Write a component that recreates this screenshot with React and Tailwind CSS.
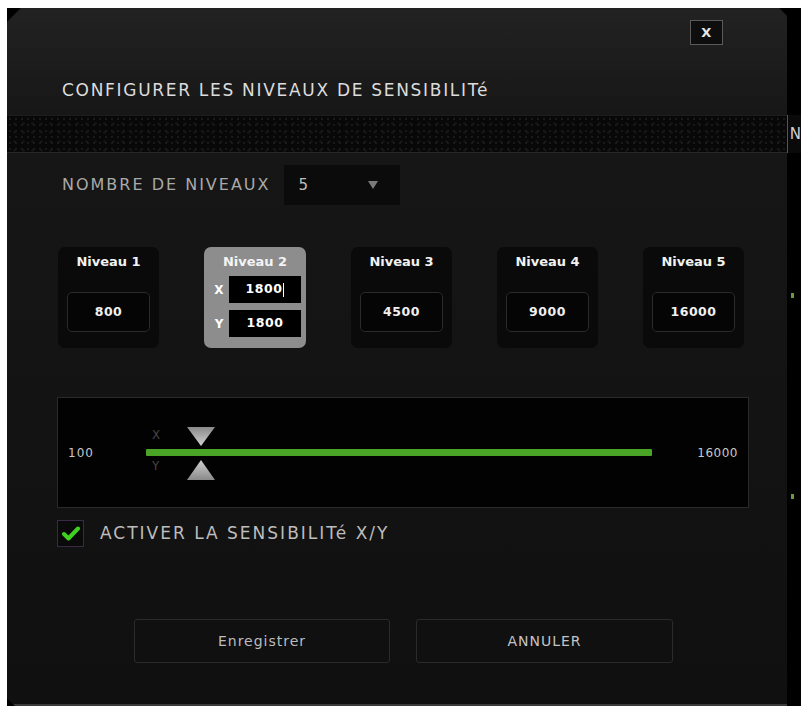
import React from "react";

const font = { fontFamily: '"DejaVu Sans", "Liberation Sans", sans-serif' };

function LevelCard({ title, value }) {
  return (
    <div className="w-[101px] h-[101px] rounded-[7px] bg-[#0a0a0a] flex flex-col items-center pt-[2px]">
      <div className="text-[13px] font-bold text-[#f2f2f2] h-[26px] flex items-center">{title}</div>
      <div className="mt-[17px] w-[83px] h-[40px] rounded-[5px] border border-[#2a2a2a] bg-[#050505] flex items-center justify-center text-[12.5px] font-bold text-[#f0f0f0] tracking-[0.5px]">
        {value}
      </div>
    </div>
  );
}

function SelectedCard() {
  return (
    <div className="w-[102px] h-[101px] rounded-[7px] bg-[#8d8d8d] flex flex-col items-center pt-[2px]">
      <div className="text-[13px] font-bold text-[#f4f4f4] h-[26px] flex items-center">Niveau 2</div>
      <div className="flex flex-col gap-[7px] mt-[1px]">
        <div className="flex items-center">
          <span className="w-[20px] text-center text-[12px] font-bold text-white">X</span>
          <div className="w-[72px] h-[27px] bg-black flex items-center justify-center text-[12.5px] font-bold text-white tracking-[0.5px]">
            1800<span className="inline-block w-[1px] h-[14px] bg-white ml-[1px]" />
          </div>
        </div>
        <div className="flex items-center">
          <span className="w-[20px] text-center text-[12px] font-bold text-white">Y</span>
          <div className="w-[72px] h-[27px] bg-black flex items-center justify-center text-[12.5px] font-bold text-white tracking-[0.5px]">
            1800
          </div>
        </div>
      </div>
    </div>
  );
}

export default function App() {
  return (
    <div className="w-[801px] h-[709px] bg-white overflow-hidden pt-[8px] pl-[7px]" style={font}>
      <div className="w-[794px] h-[698px] bg-black flex">
        {/* dialog */}
        <div
          className="w-[786px] h-[698px] flex flex-col bg-[#131313]"
          style={{ clipPath: "polygon(14px 0, 772px 0, 786px 14px, 786px 698px, 8px 698px, 0 690px, 0 14px)" }}
        >
          {/* header */}
          <div className="h-[107px] bg-gradient-to-b from-[#222222] to-[#171717] flex flex-col px-[55px]">
            <div className="flex justify-end pt-[12px] pr-[9px]">
              <div className="w-[33px] h-[25px] border border-[#5a5a5a] bg-[#0e0e0e] flex items-center justify-center text-[13px] font-bold text-[#e8e8e8]">
                X
              </div>
            </div>
            <div className="mt-[33px] text-[17px] text-[#dcdcdc] tracking-[1.7px]">
              CONFIGURER LES NIVEAUX DE SENSIBILITé
            </div>
          </div>
          {/* textured strip */}
          <div
            className="h-[38px] bg-[#080808] border-t border-[#1d1d1d] border-b border-b-[#262626]"
            style={{
              backgroundImage:
                "radial-gradient(#1a1a1a 1px, transparent 1.5px), radial-gradient(#141414 1px, transparent 1.5px)",
              backgroundSize: "6px 6px, 9px 9px",
              backgroundPosition: "0 0, 3px 3px",
            }}
          />
          {/* body */}
          <div className="flex-1 flex flex-col bg-gradient-to-b from-[#161616] to-[#101010] border-b-[2px] border-[#3a3a3a]">
            <div className="flex items-center pl-[55px] pt-[12px] h-[52px]">
              <span className="text-[16px] text-[#a9a9a9] tracking-[2px]">NOMBRE DE NIVEAUX</span>
              <div className="ml-[13px] w-[116px] h-[40px] bg-[#0b0b0b] flex items-center justify-between pl-[15px] pr-[22px]">
                <span className="text-[15px] text-[#bdbdbd]">5</span>
                <svg width="10" height="8" viewBox="0 0 10 8">
                  <path d="M0 0 L10 0 L5 8 Z" fill="#7a7a7a" />
                </svg>
              </div>
            </div>

            <div className="flex gap-[45px] pl-[51px] mt-[42px]">
              <LevelCard title="Niveau 1" value="800" />
              <SelectedCard />
              <LevelCard title="Niveau 3" value="4500" />
              <LevelCard title="Niveau 4" value="9000" />
              <LevelCard title="Niveau 5" value="16000" />
            </div>

            <div className="ml-[50px] mt-[49px] w-[692px] h-[111px] bg-[#020202] border border-[#2a2a2a] flex items-center pl-[10px] pr-[10px]">
              <span className="w-[78px] text-[12px] text-[#c8c8c8] tracking-[1px]">100</span>
              <div className="relative w-[506px] h-[60px] flex items-center">
                <div className="w-full h-[7px] bg-[#4aa526] rounded-[1px]" />
                <span className="absolute left-[6px] top-[3px] text-[12px] text-[#444]">X</span>
                <span className="absolute left-[6px] top-[34px] text-[12px] text-[#444]">Y</span>
                <svg className="absolute left-[41px] top-[4px]" width="28" height="19" viewBox="0 0 28 19">
                  <defs>
                    <linearGradient id="gd" x1="0" y1="0" x2="0" y2="1">
                      <stop offset="0" stopColor="#8a8a8a" />
                      <stop offset="1" stopColor="#d0d0d0" />
                    </linearGradient>
                  </defs>
                  <path d="M0 0 L28 0 L14 19 Z" fill="url(#gd)" />
                </svg>
                <svg className="absolute left-[41px] top-[37px]" width="28" height="20" viewBox="0 0 28 20">
                  <defs>
                    <linearGradient id="gu" x1="0" y1="0" x2="0" y2="1">
                      <stop offset="0" stopColor="#cfcfcf" />
                      <stop offset="1" stopColor="#8a8a8a" />
                    </linearGradient>
                  </defs>
                  <path d="M14 0 L28 20 L0 20 Z" fill="url(#gu)" />
                </svg>
              </div>
              <span className="ml-auto text-[12px] text-[#c8c8c8] tracking-[0.5px]">16000</span>
            </div>

            <div className="flex items-center pl-[50px] mt-[12px]">
              <div className="w-[27px] h-[27px] border border-[#3b2a45] bg-[#0a0a0a] flex items-center justify-center">
                <svg width="18" height="15" viewBox="0 0 18 15">
                  <path d="M2 8 L6.5 12.5 L16 2.5" stroke="#3fd11f" strokeWidth="4" fill="none" strokeLinecap="round" strokeLinejoin="round" />
                </svg>
              </div>
              <span className="ml-[16px] text-[17px] text-[#bdbdbd] tracking-[2px]">ACTIVER LA SENSIBILITé X/Y</span>
            </div>

            <div className="flex gap-[26px] pl-[127px] mt-[72px]">
              <div className="w-[256px] h-[44px] rounded-[3px] bg-[#101010] border border-[#2b2b2b] flex items-center justify-center text-[14px] text-[#bcbcbc] tracking-[1px]">
                Enregistrer
              </div>
              <div className="w-[257px] h-[44px] rounded-[3px] bg-[#101010] border border-[#2b2b2b] flex items-center justify-center text-[14px] text-[#c4c4c4] tracking-[1px]">
                ANNULER
              </div>
            </div>
          </div>
        </div>
        {/* right edge, window behind */}
        <div className="flex-1 flex flex-col">
          <div className="h-[107px]" />
          <div className="h-[38px] border-l border-[#555] overflow-hidden flex items-center pl-[2px] bg-[#0a0a0a]">
            <span className="text-[15px] text-[#cfcfcf]">N</span>
          </div>
          <div className="h-[140px]" />
          <div className="w-[3px] h-[5px] bg-[#6a9a3a] ml-[4px]" />
          <div className="h-[196px]" />
          <div className="w-[3px] h-[5px] bg-[#6a9a3a] ml-[4px]" />
        </div>
      </div>
    </div>
  );
}
